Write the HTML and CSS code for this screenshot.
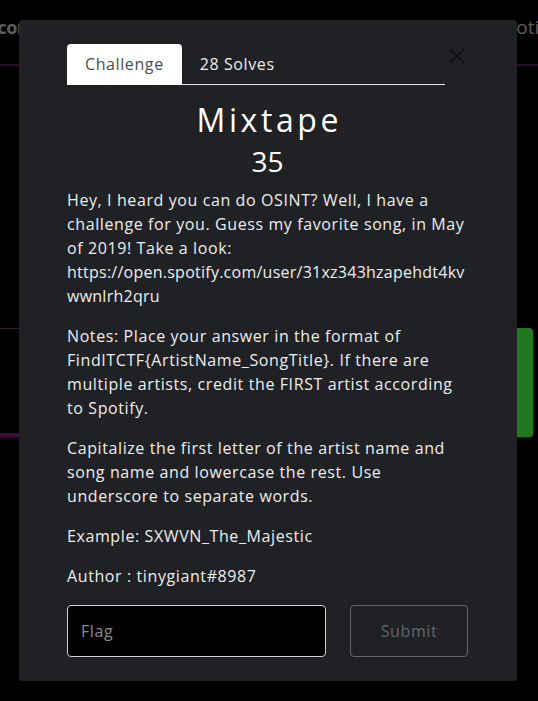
FILE: index.html
```html
<!DOCTYPE html>
<html lang="en">
<head>
<meta charset="utf-8">
<title>Mixtape</title>
<link rel="stylesheet" href="styles.css">
</head>
<body>
<div class="page">
  <header class="navbar">
    <span class="nav-left">Scoreboard</span>
    <span class="nav-right">Notifications</span>
  </header>
  <main class="board">
    <div class="challenge-row">
      <div class="cat-card"></div>
      <div class="solved-btn"></div>
    </div>
  </main>
</div>

<div class="modal-layer">
  <div class="modal">
    <div class="modal-head">
      <ul class="tabs">
        <li class="tab active">Challenge</li>
        <li class="tab">28 Solves</li>
      </ul>
      <button class="close" type="button" aria-label="Close">
        <svg width="18" height="16" viewBox="0 0 18 16"><path d="M1.5 0.8 L16.5 15.2 M16.5 0.8 L1.5 15.2" stroke="#111214" stroke-width="1.8" fill="none"/></svg>
      </button>
    </div>
    <h2 class="challenge-name">Mixtape</h2>
    <h3 class="challenge-value">35</h3>
    <div class="description">
      <p>Hey, I heard you can do OSINT? Well, I have a challenge for you. Guess my favorite song, in May of 2019! Take a look: <span class="url">https://open.spotify.com/user/31xz343hzapehdt4kvwwnlrh2qru</span></p>
      <p>Notes: Place your answer in the format of FindITCTF{ArtistName_SongTitle}. If there are multiple artists, credit the FIRST artist according to Spotify.</p>
      <p>Capitalize the first letter of the artist name and song name and lowercase the rest. Use underscore to separate words.</p>
      <p>Example: SXWVN_The_Majestic</p>
      <p class="last">Author : tinygiant#8987</p>
    </div>
    <form class="submit-row">
      <input class="flag-input" type="text" placeholder="Flag">
      <button class="submit-btn" type="button">Submit</button>
    </form>
  </div>
</div>
</body>
</html>
```

FILE: styles.css
```css
html, body {
  margin: 0;
  padding: 0;
  background: #000;
  overflow: hidden;
  height: 100%;
}

.page {
  font-family: "Open Sans", "Liberation Sans", sans-serif;
}

.navbar {
  display: flex;
  height: 64px;
  border-bottom: 2px solid #2e0b2e;
  white-space: nowrap;
  overflow: hidden;
}

.nav-left {
  flex: 0 0 514px;
  margin-left: -12px;
  padding-top: 15px;
  font-size: 18px;
  font-weight: 700;
  letter-spacing: -0.5px;
  color: #5b5b5b;
}

.nav-right {
  padding-top: 14px;
  font-size: 19px;
  color: #5e5e5e;
}

.board {
  padding-top: 262px;
}

.challenge-row {
  display: flex;
  height: 109px;
}

.cat-card {
  flex: 1;
  border-top: 1px solid #3a183a;
  border-bottom: 4px solid #3a0e3a;
  box-shadow: 0 2px 3px #260826;
}

.solved-btn {
  flex: 0 0 116px;
  margin-right: 5px;
  background: #217821;
  border-radius: 4px;
  box-shadow: 1px 1px 2px #3a103a;
}

.modal-layer {
  position: fixed;
  inset: 0;
}

.modal {
  box-sizing: border-box;
  width: 498px;
  margin: 20px 0 0 19px;
  padding: 24px 49px 24px 48px;
  background: #202125;
  border-radius: 4px;
  font-family: "Open Sans", "Liberation Sans", sans-serif;
  color: #ededed;
}

.modal-head {
  display: flex;
  align-items: flex-start;
}

.tabs {
  display: flex;
  width: 378px;
  margin: 0;
  padding: 0;
  list-style: none;
  border-bottom: 1px solid #e4e4e4;
}

.tab {
  margin-bottom: -1px;
  padding: 8px 18px 9px 18px;
  font-size: 16px;
  line-height: 24px;
  letter-spacing: 0.6px;
  color: #ececec;
  border-radius: 4px 4px 0 0;
}

.tab.active {
  background: #fff;
  color: #4a4d52;
}

.close {
  margin: 4px 0 0 3px;
  padding: 0;
  width: 18px;
  height: 16px;
  border: 0;
  background: none;
  display: flex;
}

.challenge-name {
  margin: 0 0 6px 0;
  padding-top: 16px;
  font-size: 32px;
  line-height: 1.2;
  font-weight: 400;
  letter-spacing: 3.6px;
  text-indent: 3.6px;
  text-align: center;
  color: #fff;
}

.challenge-value {
  margin: 0 0 9px 0;
  font-size: 28px;
  line-height: 1.2;
  font-weight: 400;
  text-align: center;
  color: #fff;
}

.description p {
  margin: 0 0 16px 0;
  font-size: 16px;
  line-height: 24px;
  letter-spacing: 0.6px;
  overflow-wrap: anywhere;
}

.description .url {
  letter-spacing: 0.25px;
}

.description p.last {
  margin-bottom: 17px;
}

.submit-row {
  display: grid;
  grid-template-columns: 259px 118px;
  column-gap: 24px;
  margin: 0;
}

.flag-input {
  box-sizing: border-box;
  height: 52px;
  margin: 0;
  padding: 0 13px;
  background: #000;
  border: 1px solid #d2d2d2;
  border-radius: 4px;
  font-family: "Open Sans", "Liberation Sans", sans-serif;
  font-size: 16px;
  letter-spacing: 0.6px;
  color: #eee;
  outline: none;
}

.flag-input::placeholder {
  color: #8b8b8b;
}

.submit-btn {
  box-sizing: border-box;
  height: 52px;
  margin: 0;
  background: transparent;
  border: 1px solid #62676d;
  border-radius: 4px;
  font-family: "Open Sans", "Liberation Sans", sans-serif;
  font-size: 16px;
  letter-spacing: 0.6px;
  color: #62676d;
}
```
